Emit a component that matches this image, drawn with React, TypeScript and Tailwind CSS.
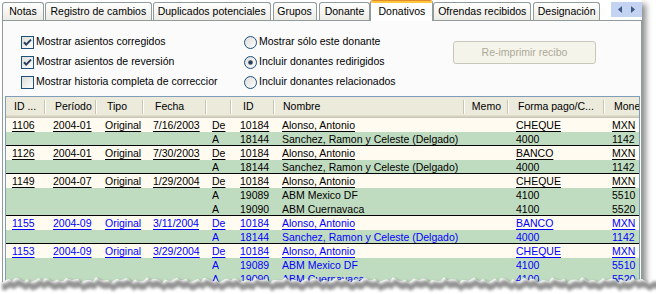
import React from "react";

const TABS = [
  { label: "Notas", w: "w-[42px]", ml: "ml-[2px]" },
  { label: "Registro de cambios", w: "w-[107px]", ml: "ml-[1px]" },
  { label: "Duplicados potenciales", w: "w-[118px]", ml: "ml-[1px]" },
  { label: "Grupos", w: "w-[44px]", ml: "ml-[2px]" },
  { label: "Donante", w: "w-[52px]", ml: "ml-[2px]" },
  { label: "Donativos", w: "w-[63px]", ml: "ml-0", active: true },
  { label: "Ofrendas recibidos", w: "w-[98px]", ml: "ml-0" },
  { label: "Designación", w: "w-[67px]", ml: "ml-[2px]" },
];

const COLS = [
  { w: "w-[40px]", pl: "pl-[6px]", hpl: "pl-[8px]", title: "ID ..." },
  { w: "w-[51px]", pl: "pl-[7px]", hpl: "pl-[9px]", title: "Período" },
  { w: "w-[47px]", pl: "pl-[8px]", hpl: "pl-[10px]", title: "Tipo" },
  { w: "w-[63px]", pl: "pl-[9px]", hpl: "pl-[11px]", title: "Fecha" },
  { w: "w-[25px]", pl: "pl-[5px]", hpl: "pl-[5px]", title: "" },
  { w: "w-[43px]", pl: "pl-[8px]", hpl: "pl-[11px]", title: "ID" },
  { w: "w-[190px]", pl: "pl-[7px]", hpl: "pl-[8px]", title: "Nombre" },
  { w: "w-[44px]", pl: "pl-[7px]", hpl: "pl-[4px]", title: "Memo", right: true },
  { w: "w-[96px]", pl: "pl-[7px]", hpl: "pl-[9px]", title: "Forma pago/C..." },
  { w: "w-[40px]", pl: "pl-[7px]", hpl: "pl-[9px]", title: "Mone" },
];

type Row = string[];
type Group = { blue?: boolean; rows: Row[] };

const SANCHEZ = "Sanchez, Ramon y Celeste (Delgado)";

const GROUPS: Group[] = [
  {
    rows: [
      ["1106", "2004-01", "Original", "7/16/2003", "De", "10184", "Alonso, Antonio", "", "CHEQUE", "MXN"],
      ["", "", "", "", "A", "18144", SANCHEZ, "", "4000", "1142"],
    ],
  },
  {
    rows: [
      ["1126", "2004-01", "Original", "7/30/2003", "De", "10184", "Alonso, Antonio", "", "BANCO", "MXN"],
      ["", "", "", "", "A", "18144", SANCHEZ, "", "4000", "1142"],
    ],
  },
  {
    rows: [
      ["1149", "2004-07", "Original", "1/29/2004", "De", "10184", "Alonso, Antonio", "", "CHEQUE", "MXN"],
      ["", "", "", "", "A", "19089", "ABM Mexico DF", "", "4100", "5510"],
      ["", "", "", "", "A", "19090", "ABM Cuernavaca", "", "4100", "5520"],
    ],
  },
  {
    blue: true,
    rows: [
      ["1155", "2004-09", "Original", "3/11/2004", "De", "10184", "Alonso, Antonio", "", "BANCO", "MXN"],
      ["", "", "", "", "A", "18144", SANCHEZ, "", "4000", "1142"],
    ],
  },
  {
    blue: true,
    rows: [
      ["1153", "2004-09", "Original", "3/29/2004", "De", "10184", "Alonso, Antonio", "", "CHEQUE", "MXN"],
      ["", "", "", "", "A", "19089", "ABM Mexico DF", "", "4100", "5510"],
      ["", "", "", "", "A", "19090", "ABM Cuernavaca", "", "4100", "5520"],
    ],
  },
];

function CheckBox({ checked }: { checked: boolean }) {
  return (
    <svg width="13" height="13" viewBox="0 0 13 13" className="shrink-0">
      <defs>
        <linearGradient id="cbfill" x1="0" y1="0" x2="1" y2="1">
          <stop offset="0" stopColor="#dcdcd7" />
          <stop offset="1" stopColor="#ffffff" />
        </linearGradient>
      </defs>
      <rect x="0.5" y="0.5" width="12" height="12" fill="url(#cbfill)" stroke="#1c5180" />
      {checked && (
        <path d="M3 6.2 L5.2 8.6 L10 3.6" fill="none" stroke="#2b405e" strokeWidth="2" />
      )}
    </svg>
  );
}

function Radio({ checked }: { checked: boolean }) {
  return (
    <svg width="13" height="13" viewBox="0 0 13 13" className="shrink-0">
      <defs>
        <linearGradient id="rdfill" x1="0" y1="0" x2="1" y2="1">
          <stop offset="0" stopColor="#dcdcd7" />
          <stop offset="1" stopColor="#ffffff" />
        </linearGradient>
      </defs>
      <circle cx="6.5" cy="6.5" r="6" fill="url(#rdfill)" stroke="#1c5180" />
      {checked && <circle cx="6.5" cy="6.5" r="2.3" fill="#2b405e" />}
    </svg>
  );
}

function TornEdge() {
  const top: string[] = [];
  const shade: string[] = [];
  for (let x = 0; x <= 660; x += 3) {
    const i = x / 3;
    const y = 14 + 1.4 * Math.sin(i * 1.9) + 1.1 * Math.sin(i * 0.7 + 1) + 0.7 * Math.sin(i * 3.3);
    top.push(`${x},${y.toFixed(1)}`);
    shade.push(`${x + 2},${(y + 1.5).toFixed(1)}`);
  }
  const whitePoly = `0,30 ${top.join(" ")} 660,30`;
  const shadePoly = `${shade.join(" ")} ${[...shade].reverse().map((p) => {
    const [a, b] = p.split(",");
    return `${a},${(parseFloat(b) + 7).toFixed(1)}`;
  }).join(" ")}`;
  return (
    <svg width="656" height="30" viewBox="0 0 656 30" className="absolute left-0 top-[266px]">
      <defs>
        <filter id="tblur" x="-5%" y="-100%" width="110%" height="300%">
          <feGaussianBlur stdDeviation="1.8" />
        </filter>
      </defs>
      <polygon points={whitePoly} fill="#ffffff" />
      <polygon points={shadePoly} fill="rgba(0,0,0,0.42)" filter="url(#tblur)" />
    </svg>
  );
}

function Tab({ label, w, ml, active }: { label: string; w: string; ml: string; active?: boolean }) {
  if (active) {
    return (
      <div
        className={`${w} ${ml} relative z-10 -mb-px h-[21px] flex flex-col bg-white border-x border-[#919b9c] rounded-t-[3px] overflow-hidden`}
      >
        <div className="h-px bg-[#e68b2c]" />
        <div className="h-[2px] bg-[#ffc83c]" />
        <div className="flex-1 flex items-start justify-center pt-[1px]">{label}</div>
      </div>
    );
  }
  return (
    <div
      className={`${w} ${ml} h-[18px] flex items-center justify-center border border-b-0 border-[#919b9c] rounded-t-[3px] bg-linear-to-b from-white to-[#ecebe5]`}
    >
      {label}
    </div>
  );
}

function HeaderCell({ col }: { col: (typeof COLS)[number] }) {
  return (
    <div className={`${col.w} shrink-0 flex items-center h-full`}>
      <span className={`flex-1 whitespace-nowrap overflow-hidden ${col.right ? "text-right pr-[6px]" : col.hpl}`}>
        {col.title}
      </span>
      <span className="w-px h-[14px] bg-[#c7c5b2] shadow-[1px_0_0_#ffffff] mr-px" />
    </div>
  );
}

function GridRow({ row, first, last, blue }: { row: Row; first: boolean; last: boolean; blue?: boolean }) {
  return (
    <div
      className={`flex h-[14px] leading-[14px] ${first ? "bg-[#fffbf0]" : "bg-[#c0dcc0]"} ${
        last ? "shadow-[inset_0_-1px_0_#000000]" : ""
      } ${blue ? "text-[#0000ff]" : "text-black"}`}
    >
      {COLS.map((c, i) => (
        <div key={i} className={`${c.w} ${c.pl} shrink-0 whitespace-nowrap overflow-hidden`}>
          <span className={first && row[i] ? "underline underline-offset-[2px]" : ""}>{row[i]}</span>
        </div>
      ))}
    </div>
  );
}

export default function App() {
  return (
    <div className="w-[656px] h-[294px] bg-white relative overflow-hidden font-['Liberation_Sans',Arial,sans-serif] text-[10.5px] text-black">
      <div className="w-[642px] h-[284px] flex flex-col overflow-hidden bg-white shadow-[4px_4px_6px_rgba(0,0,0,0.45)]">
        <div className="h-[20px] flex items-end shrink-0">
          {TABS.map((t) => (
            <Tab key={t.label} {...t} />
          ))}
          <div className="self-start mt-[2px] ml-[11px] w-[31px] h-[15px] bg-[#c4d3f2] flex items-center justify-center gap-[9px]">
            <svg width="4" height="7" viewBox="0 0 4 7">
              <path d="M4 0 L0 3.5 L4 7 Z" fill="#3b5a82" />
            </svg>
            <svg width="4" height="7" viewBox="0 0 4 7">
              <path d="M0 0 L4 3.5 L0 7 Z" fill="#3b5a82" />
            </svg>
          </div>
        </div>

        <div className="ml-[2px] w-[640px] flex-1 border border-[#919b9c] bg-[#fbfbfc] pl-[18px] pt-[11px] flex flex-col">
          <div className="flex">
            <div className="w-[223px] flex flex-col">
              {[
                ["Mostrar asientos corregidos", true],
                ["Mostrar asientos de reversión", true],
                ["Mostrar historia completa de correccior", false],
              ].map(([label, checked]) => (
                <div key={label as string} className="h-[20px] flex items-center gap-[2px] whitespace-nowrap">
                  <CheckBox checked={checked as boolean} />
                  <span>{label as string}</span>
                </div>
              ))}
            </div>
            <div className="w-[209px] flex flex-col">
              {[
                ["Mostrar sólo este donante", false],
                ["Incluir donantes redirigidos", true],
                ["Incluir donantes relacionados", false],
              ].map(([label, checked]) => (
                <div key={label as string} className="h-[20px] flex items-center gap-[2px] whitespace-nowrap">
                  <Radio checked={checked as boolean} />
                  <span>{label as string}</span>
                </div>
              ))}
            </div>
            <div className="mt-[9px] w-[143px] h-[23px] border border-[#c9c7ba] rounded-[3px] bg-[#f5f4ea] text-[#aca899] flex items-center justify-center">
              Re-imprimir recibo
            </div>
          </div>

          <div className="-ml-[16px] mt-[4px] w-[635px] flex-1 border border-[#7f9db9] bg-white overflow-hidden flex flex-col">
            <div className="h-[21px] shrink-0 flex flex-col bg-[#ebeadb]">
              <div className="flex-1 flex items-center pt-[1px]">
                {COLS.map((c, i) => (
                  <HeaderCell key={i} col={c} />
                ))}
              </div>
              <div className="h-px bg-[#e2decd]" />
              <div className="h-px bg-[#d6d2c2]" />
              <div className="h-px bg-[#cbc7b8]" />
            </div>
            {GROUPS.map((g, gi) =>
              g.rows.map((r, ri) => (
                <GridRow
                  key={`${gi}-${ri}`}
                  row={r}
                  first={ri === 0}
                  last={ri === g.rows.length - 1}
                  blue={g.blue}
                />
              ))
            )}
          </div>
        </div>
      </div>
      <TornEdge />
    </div>
  );
}
